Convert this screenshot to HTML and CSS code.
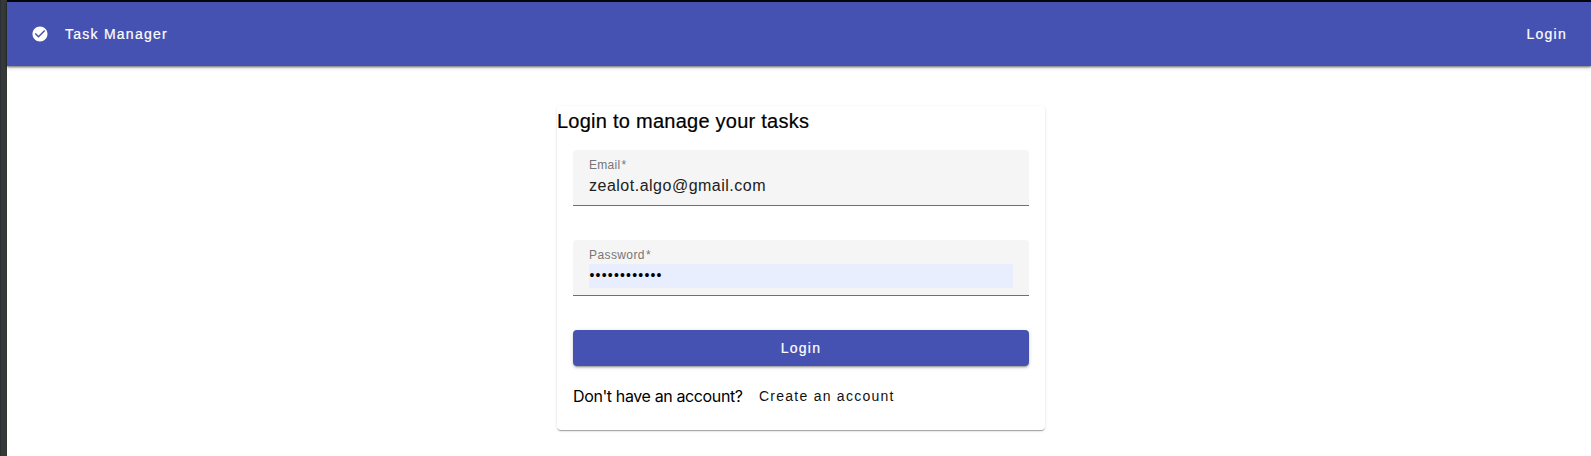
FILE: index.html
```html
<!DOCTYPE html>
<html lang="en">
<head>
<meta charset="utf-8">
<title>Task Manager</title>
<link rel="stylesheet" href="styles.css">
</head>
<body>
<div class="edge"></div>
<div class="app">
  <header class="toolbar">
    <a class="brand">
      <svg class="brand-icon" viewBox="0 0 24 24"><path fill="currentColor" d="M12 2C6.48 2 2 6.48 2 12s4.48 10 10 10 10-4.48 10-10S17.52 2 12 2zm-2 15l-5-5 1.41-1.41L10 14.17l7.59-7.59L19 8l-9 9z"/></svg>
      <span class="brand-name">Task Manager</span>
    </a>
    <a class="nav-login">Login</a>
  </header>
  <main class="card">
    <h1 class="title">Login to manage your tasks</h1>
    <form class="form">
      <label class="field">
        <span class="label">Email<span class="star">*</span></span>
        <span class="value">zealot.algo@gmail.com</span>
      </label>
      <label class="field">
        <span class="label label-password">Password<span class="star">*</span></span>
        <span class="value autofill">••••••••••••</span>
      </label>
      <button class="submit" type="button">Login</button>
      <div class="signup">
        <span class="question">Don't have an account?</span>
        <a class="create">Create an account</a>
      </div>
    </form>
  </main>
</div>
</body>
</html>
```
FILE: styles.css
```css
* { box-sizing: border-box; }
body {
  margin: 0;
  height: 456px;
  display: flex;
  overflow: hidden;
  background: #fff;
  font-family: "Liberation Sans", Arial, sans-serif;
}
.edge {
  width: 7px;
  background: linear-gradient(to right, #2a3036 0 1px, #353a38 1px 6px, #303532 6px);
}
.app {
  flex: 1;
  border-top: 2px solid #05050c;
}
.toolbar {
  height: 64px;
  padding: 0 24px;
  display: flex;
  align-items: center;
  justify-content: space-between;
  background: #4652b1;
  color: #fff;
  font-size: 14px;
  font-weight: 400;
  letter-spacing: 1.25px;
  -webkit-text-stroke: 0.2px currentColor;
  box-shadow: 0 1px 2px rgba(0, 0, 0, .5), 0 2px 4px rgba(0, 0, 0, .16);
}
.brand { display: flex; align-items: center; }
.brand-icon { width: 18px; height: 18px; margin-right: 16px; -webkit-text-stroke: 0; }
.card {
  width: 488px;
  height: 324px;
  margin: 40px 0 0 550px;
  border-radius: 4px;
  box-shadow: 0 2px 1px -1px rgba(0, 0, 0, .2), 0 1px 1px rgba(0, 0, 0, .14), 0 1px 3px rgba(0, 0, 0, .12);
}
.title {
  margin: 0;
  height: 32px;
  font-size: 20px;
  line-height: 30px;
  font-weight: 400;
  letter-spacing: .25px;
  -webkit-text-stroke: 0.2px currentColor;
}
.form { padding: 12px 16px 0; }
.field {
  display: block;
  height: 56px;
  margin-bottom: 34px;
  padding: 8px 16px 0;
  border-radius: 4px 4px 0 0;
  border-bottom: 1px solid #6f6f6f;
  background: #f5f5f5;
}
.label {
  display: block;
  height: 16px;
  font-size: 12px;
  line-height: 14px;
  letter-spacing: .3px;
  color: #757575;
}
.label-password { letter-spacing: .4px; }
.star { margin-left: 1px; }
.value {
  display: block;
  height: 24px;
  font-size: 16px;
  line-height: 24px;
  letter-spacing: .5px;
  color: #212121;
}
.autofill {
  padding-left: .5px;
  background: #e8eefd;
  color: #000;
  font-size: 14px;
  line-height: 23px;
  letter-spacing: 1.2px;
}
.submit {
  display: block;
  width: 100%;
  height: 36px;
  padding: 0;
  border: 0;
  border-radius: 4px;
  background: #4652b1;
  color: #fff;
  font: 400 14px "Liberation Sans", Arial, sans-serif;
  letter-spacing: 1.25px;
  -webkit-text-stroke: 0.2px currentColor;
  box-shadow: 0 3px 1px -2px rgba(0, 0, 0, .2), 0 2px 2px rgba(0, 0, 0, .14), 0 1px 5px rgba(0, 0, 0, .12);
}
.signup {
  display: flex;
  align-items: center;
  height: 36px;
  margin-top: 12px;
}
.question {
  width: 186px;
  white-space: nowrap;
  font-family: Inter, sans-serif;
  font-size: 16px;
  letter-spacing: -.38px;
}
.create {
  font-size: 14px;
  letter-spacing: 1.25px;
  color: #111;
}
```
